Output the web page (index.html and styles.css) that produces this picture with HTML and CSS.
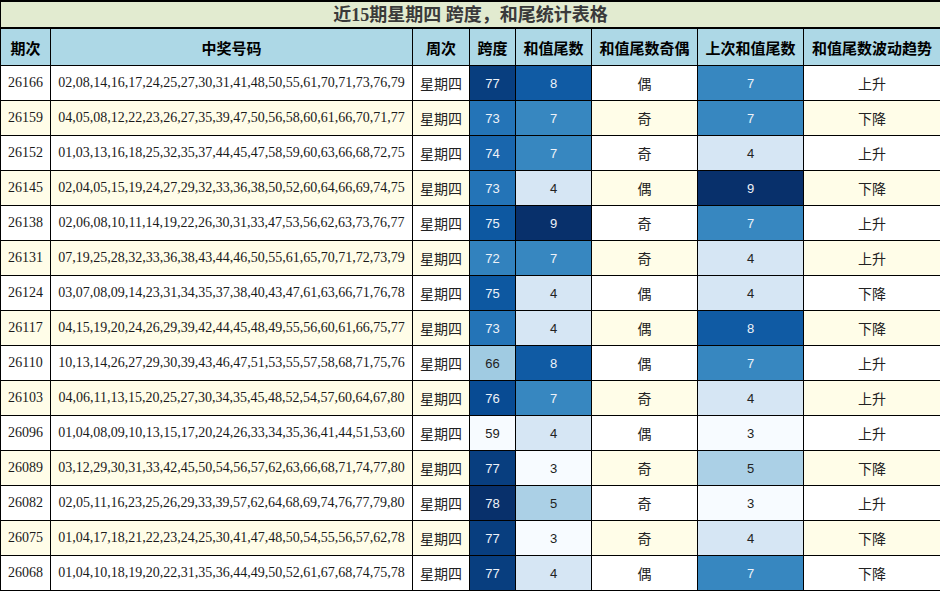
FILE: index.html
```html
<!DOCTYPE html>
<html lang="zh">
<head>
<meta charset="utf-8">
<title>近15期星期四 跨度，和尾统计表格</title>
<link rel="stylesheet" href="styles.css">
</head>
<body>
<table class="stats">
  <colgroup>
    <col class="w-qi"><col class="w-nums"><col class="w-week"><col class="w-span"><col class="w-tail"><col class="w-oe"><col class="w-prev"><col class="w-trend">
  </colgroup>
  <thead>
    <tr class="title-row"><th colspan="8">近15期星期四 跨度，和尾统计表格</th></tr>
    <tr class="head-row">
      <th>期次</th><th>中奖号码</th><th>周次</th><th>跨度</th><th>和值尾数</th><th>和值尾数奇偶</th><th>上次和值尾数</th><th>和值尾数波动趋势</th>
    </tr>
  </thead>
  <tbody>
    <tr><td class="num">26166</td><td class="num">02,08,14,16,17,24,25,27,30,31,41,48,50,55,61,70,71,73,76,79</td><td class="cn">星期四</td><td class="heat light" style="background:#083e7f">77</td><td class="heat light" style="background:#105ba4">8</td><td class="cn">偶</td><td class="heat light" style="background:#3787c0">7</td><td class="cn">上升</td></tr>
    <tr class="alt"><td class="num">26159</td><td class="num">04,05,08,12,22,23,26,27,35,39,47,50,56,58,60,61,66,70,71,77</td><td class="cn">星期四</td><td class="heat light" style="background:#2474b7">73</td><td class="heat light" style="background:#3787c0">7</td><td class="cn">奇</td><td class="heat light" style="background:#3787c0">7</td><td class="cn">下降</td></tr>
    <tr><td class="num">26152</td><td class="num">01,03,13,16,18,25,32,35,37,44,45,47,58,59,60,63,66,68,72,75</td><td class="cn">星期四</td><td class="heat light" style="background:#1966ad">74</td><td class="heat light" style="background:#3787c0">7</td><td class="cn">奇</td><td class="heat" style="background:#d6e6f4">4</td><td class="cn">上升</td></tr>
    <tr class="alt"><td class="num">26145</td><td class="num">02,04,05,15,19,24,27,29,32,33,36,38,50,52,60,64,66,69,74,75</td><td class="cn">星期四</td><td class="heat light" style="background:#2474b7">73</td><td class="heat" style="background:#d6e6f4">4</td><td class="cn">偶</td><td class="heat light" style="background:#08306b">9</td><td class="cn">下降</td></tr>
    <tr><td class="num">26138</td><td class="num">02,06,08,10,11,14,19,22,26,30,31,33,47,53,56,62,63,73,76,77</td><td class="cn">星期四</td><td class="heat light" style="background:#0d58a1">75</td><td class="heat light" style="background:#08306b">9</td><td class="cn">奇</td><td class="heat light" style="background:#3787c0">7</td><td class="cn">上升</td></tr>
    <tr class="alt"><td class="num">26131</td><td class="num">07,19,25,28,32,33,36,38,43,44,46,50,55,61,65,70,71,72,73,79</td><td class="cn">星期四</td><td class="heat light" style="background:#3282be">72</td><td class="heat light" style="background:#3787c0">7</td><td class="cn">奇</td><td class="heat" style="background:#d6e6f4">4</td><td class="cn">上升</td></tr>
    <tr><td class="num">26124</td><td class="num">03,07,08,09,14,23,31,34,35,37,38,40,43,47,61,63,66,71,76,78</td><td class="cn">星期四</td><td class="heat light" style="background:#0d58a1">75</td><td class="heat" style="background:#d6e6f4">4</td><td class="cn">偶</td><td class="heat" style="background:#d6e6f4">4</td><td class="cn">下降</td></tr>
    <tr class="alt"><td class="num">26117</td><td class="num">04,15,19,20,24,26,29,39,42,44,45,48,49,55,56,60,61,66,75,77</td><td class="cn">星期四</td><td class="heat light" style="background:#2474b7">73</td><td class="heat" style="background:#d6e6f4">4</td><td class="cn">偶</td><td class="heat light" style="background:#105ba4">8</td><td class="cn">下降</td></tr>
    <tr><td class="num">26110</td><td class="num">10,13,14,26,27,29,30,39,43,46,47,51,53,55,57,58,68,71,75,76</td><td class="cn">星期四</td><td class="heat" style="background:#a0cbe2">66</td><td class="heat light" style="background:#105ba4">8</td><td class="cn">偶</td><td class="heat light" style="background:#3787c0">7</td><td class="cn">上升</td></tr>
    <tr class="alt"><td class="num">26103</td><td class="num">04,06,11,13,15,20,25,27,30,34,35,45,48,52,54,57,60,64,67,80</td><td class="cn">星期四</td><td class="heat light" style="background:#084b93">76</td><td class="heat light" style="background:#3787c0">7</td><td class="cn">奇</td><td class="heat" style="background:#d6e6f4">4</td><td class="cn">上升</td></tr>
    <tr><td class="num">26096</td><td class="num">01,04,08,09,10,13,15,17,20,24,26,33,34,35,36,41,44,51,53,60</td><td class="cn">星期四</td><td class="heat" style="background:#f7fbff">59</td><td class="heat" style="background:#d6e6f4">4</td><td class="cn">偶</td><td class="heat" style="background:#f7fbff">3</td><td class="cn">上升</td></tr>
    <tr class="alt"><td class="num">26089</td><td class="num">03,12,29,30,31,33,42,45,50,54,56,57,62,63,66,68,71,74,77,80</td><td class="cn">星期四</td><td class="heat light" style="background:#083e7f">77</td><td class="heat" style="background:#f7fbff">3</td><td class="cn">奇</td><td class="heat" style="background:#abd0e6">5</td><td class="cn">下降</td></tr>
    <tr><td class="num">26082</td><td class="num">02,05,11,16,23,25,26,29,33,39,57,62,64,68,69,74,76,77,79,80</td><td class="cn">星期四</td><td class="heat light" style="background:#08306b">78</td><td class="heat" style="background:#abd0e6">5</td><td class="cn">奇</td><td class="heat" style="background:#f7fbff">3</td><td class="cn">上升</td></tr>
    <tr class="alt"><td class="num">26075</td><td class="num">01,04,17,18,21,22,23,24,25,30,41,47,48,50,54,55,56,57,62,78</td><td class="cn">星期四</td><td class="heat light" style="background:#083e7f">77</td><td class="heat" style="background:#f7fbff">3</td><td class="cn">奇</td><td class="heat" style="background:#d6e6f4">4</td><td class="cn">下降</td></tr>
    <tr><td class="num">26068</td><td class="num">01,04,10,18,19,20,22,31,35,36,44,49,50,52,61,67,68,74,75,78</td><td class="cn">星期四</td><td class="heat light" style="background:#083e7f">77</td><td class="heat" style="background:#d6e6f4">4</td><td class="cn">偶</td><td class="heat light" style="background:#3787c0">7</td><td class="cn">下降</td></tr>
  </tbody>
</table>
</body>
</html>
```

FILE: styles.css
```css
html, body {
  margin: 0;
  padding: 0;
  background: #ffffff;
}

.stats {
  width: 940px;
  table-layout: fixed;
  border-collapse: collapse;
  font-family: "Liberation Serif", "Noto Sans CJK SC", serif;
  color: #111;
}

.w-qi { width: 50px; }
.w-nums { width: 362px; }
.w-week { width: 57px; }
.w-span { width: 46px; }
.w-tail { width: 76px; }
.w-oe { width: 106px; }
.w-prev { width: 106px; }
.w-trend { width: 137px; }

.stats th,
.stats td {
  border: 1px solid #000;
  padding: 0;
  text-align: center;
  white-space: nowrap;
  overflow: hidden;
}

.title-row th {
  height: 25px;
  border-top: 2px solid #000;
  border-bottom: 2px solid #000;
  background: #e2ebd0;
  color: #3a3a3a;
  font-size: 18px;
  font-weight: bold;
  line-height: 24px;
}

.head-row th {
  height: 36px;
  background: #add8e6;
  color: #000;
  font-size: 15px;
  font-weight: bold;
  font-family: "Noto Sans CJK SC", sans-serif;
}

.stats td {
  height: 34px;
  background: #ffffff;
}

.stats tr.alt td {
  background: #fffde8;
}

.num {
  font-size: 14px;
  color: #1a1a1a;
  padding-bottom: 3px;
}

.cn {
  font-family: "Noto Sans CJK SC", sans-serif;
  font-size: 14px;
  color: #222;
}

.heat {
  font-family: "Liberation Sans", "DejaVu Sans", sans-serif;
  font-size: 13px;
  color: #222;
  padding-bottom: 3px;
}

.heat.light {
  color: #eef2f8;
}
```
